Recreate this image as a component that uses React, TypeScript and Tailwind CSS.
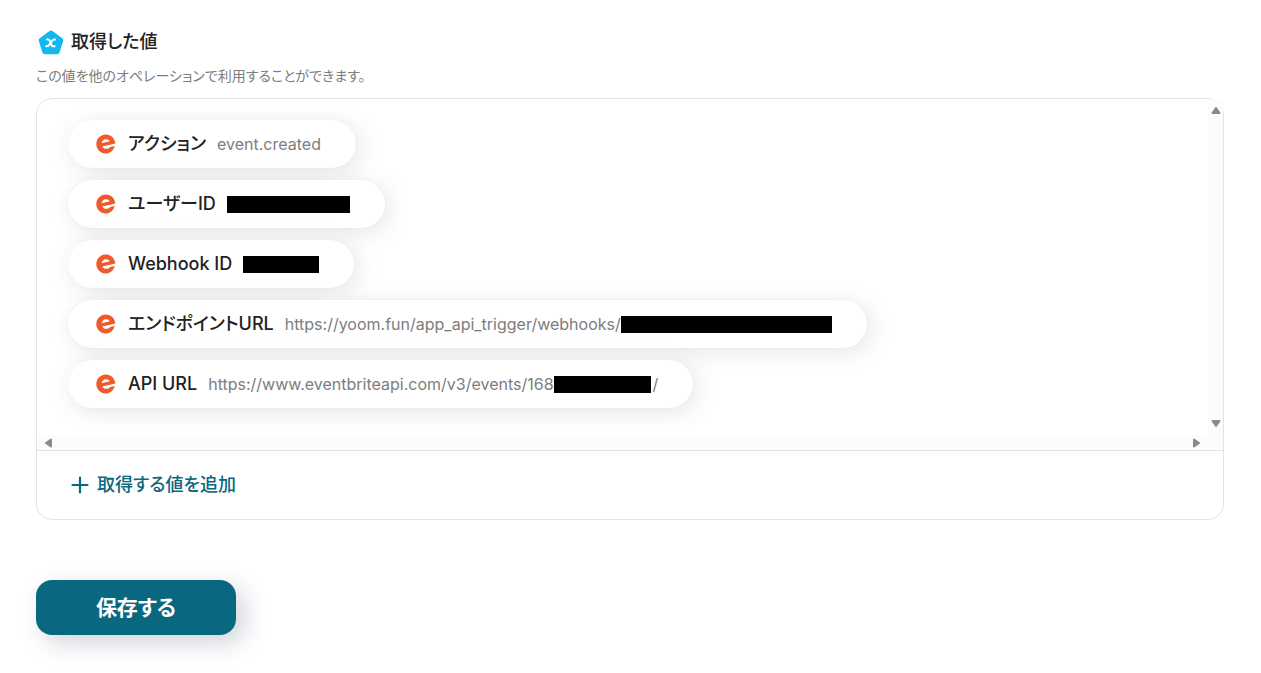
import type { ReactNode } from "react";

type TValueItem = {
  label: string;
  value: ReactNode;
};

const Redacted = ({ className }: { className: string }) => (
  <span className={`inline-block h-[17px] bg-black ${className}`} />
);

const items: TValueItem[] = [
  { label: "アクション", value: "event.created" },
  { label: "ユーザーID", value: <Redacted className="w-[123px]" /> },
  { label: "Webhook ID", value: <Redacted className="w-[76px]" /> },
  {
    label: "エンドポイントURL",
    value: (
      <>
        https://yoom.fun/app_api_trigger/webhooks/
        <Redacted className="w-[211px]" />
      </>
    ),
  },
  {
    label: "API URL",
    value: (
      <>
        https://www.eventbriteapi.com/v3/events/168
        <Redacted className="w-[97px] mr-0.5" />/
      </>
    ),
  },
];

const ValueIcon = () => (
  <svg className="w-7 h-7" viewBox="0 0 28 28" fill="none" aria-hidden="true">
    <path
      d="M15 5 24.8 12.3 21.2 23.7H8.8L5.2 12.3Z"
      fill="#12b9ec"
      stroke="#12b9ec"
      strokeWidth="5"
      strokeLinejoin="round"
    />
    <path
      d="M11 11.400c2.200-.3 2.600.6 3.200 2.200l1 2.800c.5 1.500 1.200 2.300 3.400 1.900M19 11.500c-1.700-.3-2.400.5-3.300 1.800l-2.300 3.300c-.8 1.200-1.600 2-3.300 1.700"
      stroke="#fff"
      strokeWidth="2"
      strokeLinecap="round"
    />
  </svg>
);

const EventbriteIcon = () => (
  <svg className="w-5 h-5 shrink-0" viewBox="0 0 20 20" aria-hidden="true">
    <path
      d="M9.8.6C15 .6 19 4.5 19.300 9.600L6.300 12.500c.8 1.600 2.200 2.400 4 2.300 1.600 0 2.900-.7 3.900-1.900l4.500-1c-1 4.400-4.700 7.600-9.200 7.600C4.500 19.500.3 15.300.3 10.100S4.500.6 9.800.6Z"
      fill="#f05a2b"
    />
    <path
      d="M5.500 9.200C5.900 6.900 7.700 5.300 9.800 5.200c1.700-.1 3.200.6 4 2.100Z"
      fill="#fff"
    />
  </svg>
);

const ScrollArrow = ({
  label,
  path,
  className,
}: {
  label: string;
  path: string;
  className: string;
}) => (
  <button
    type="button"
    aria-label={label}
    className={`flex items-center justify-center ${className}`}
  >
    <svg className="w-[10px] h-[10px]" viewBox="0 0 10 10" aria-hidden="true">
      <path
        d={path}
        fill="#8b8b8b"
        stroke="#8b8b8b"
        strokeWidth="2"
        strokeLinejoin="round"
      />
    </svg>
  </button>
);

const ValueChip = ({ label, value }: TValueItem) => (
  <li className="flex items-center w-fit h-12 pl-7 pr-[35px] rounded-full bg-white shadow-[4px_4px_24px_rgba(0,0,0,0.1),0_0_2px_rgba(0,0,0,0.06)] whitespace-nowrap">
    <EventbriteIcon />
    <span className="ml-3 text-[18px] leading-6 font-medium text-[#222]">
      {label}
    </span>
    <span className="flex items-center ml-[11px] text-[16px] leading-6 text-[#7d7d7d]">
      {value}
    </span>
  </li>
);

const App = () => {
  return (
    <main className="pl-9 pr-[37px] pt-7 pb-9 bg-white text-[#222] font-['Inter','Noto_Sans_CJK_JP',sans-serif] [font-feature-settings:'palt']">
      <h2 className="flex items-center gap-[7px] h-7 text-[18px] leading-7 font-medium">
        <ValueIcon />
        取得した値
      </h2>
      <p className="mt-[10px] text-[14px] leading-5 text-[#7d7d7d]">
        この値を他のオペレーションで利用することができます。
      </p>

      <section className="mt-3 border border-[#e3e3e3] rounded-2xl">
        <div className="grid grid-cols-[minmax(0,1fr)_15px] border-b border-[#e3e3e3]">
          <ul className="flex flex-col gap-3 h-[336px] pl-[31px] pt-[21px] overflow-hidden rounded-tl-2xl">
            {items.map((item) => (
              <ValueChip key={item.label} {...item} />
            ))}
          </ul>
          <div className="flex flex-col justify-between pt-[6px] pb-[6px] bg-[#fcfcfc]">
            <ScrollArrow label="上へスクロール" path="M5 3 8.5 8H1.5Z" className="h-[10px]" />
            <ScrollArrow label="下へスクロール" path="M5 7 8.5 2H1.5Z" className="h-[10px]" />
          </div>
          <div className="flex justify-between h-[15px] pl-[6px] pr-[6px] bg-[#fcfcfc]">
            <ScrollArrow label="左へスクロール" path="M3 5 8 1.5V8.5Z" className="w-[10px]" />
            <ScrollArrow label="右へスクロール" path="M7 5 2 1.5V8.5Z" className="w-[10px]" />
          </div>
          <div className="bg-[#fcfcfc]" />
        </div>
        <div className="flex items-center h-[68px] pl-[34px]">
          <button
            type="button"
            className="flex items-center gap-2 text-[18px] leading-6 font-medium text-[#0a6780]"
          >
            <svg className="w-[18px] h-[18px]" viewBox="0 0 18 18" aria-hidden="true">
              <path
                d="M9 1.5v15M1.5 9h15"
                stroke="currentColor"
                strokeWidth="2.2"
                strokeLinecap="round"
              />
            </svg>
            取得する値を追加
          </button>
        </div>
      </section>

      <button
        type="button"
        className="mt-[60px] w-[200px] h-[55px] rounded-2xl bg-[#0a6780] text-white text-[21px] leading-7 font-bold shadow-[8px_8px_24px_rgba(20,40,70,0.2)]"
      >
        保存する
      </button>
    </main>
  );
};

export default App;
